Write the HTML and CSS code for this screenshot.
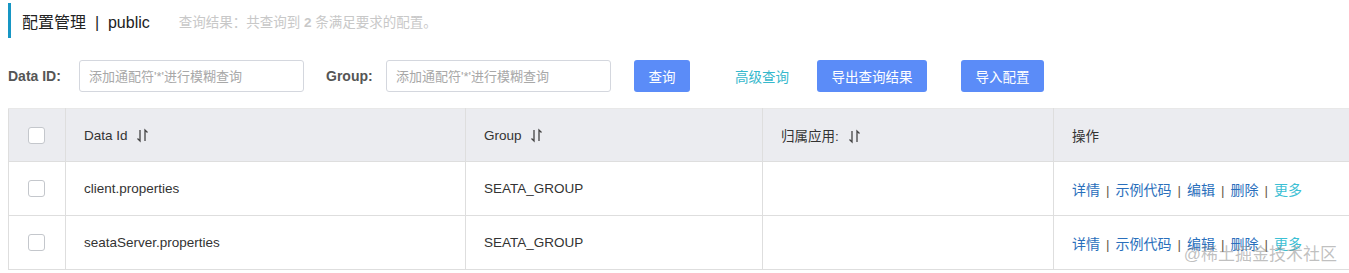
FILE: index.html
```html
<!DOCTYPE html>
<html lang="zh-CN">
<head>
    <meta charset="UTF-8">
    <meta name="viewport" content="width=device-width, initial-scale=1.0">
    <title>配置管理 - public</title>
    <link rel="stylesheet" href="styles.css">
</head>
<body>
    <div class="page">
        <div class="title-bar">
            <span class="title">配置管理 &nbsp;|&nbsp; public</span>
            <span class="result">查询结果：共查询到 <b>2</b> 条满足要求的配置。</span>
        </div>

        <div class="search-row">
            <label class="label label-id">Data ID:</label>
            <input class="input" type="text" placeholder="添加通配符'*'进行模糊查询">
            <label class="label label-group">Group:</label>
            <input class="input" type="text" placeholder="添加通配符'*'进行模糊查询">
            <button class="btn btn-search">查询</button>
            <a class="advanced" href="#">高级查询</a>
            <button class="btn btn-export">导出查询结果</button>
            <button class="btn btn-import">导入配置</button>
        </div>

        <table class="config-table">
            <colgroup>
                <col class="col-check">
                <col class="col-id">
                <col class="col-group">
                <col class="col-app">
                <col class="col-ops">
            </colgroup>
            <thead>
                <tr>
                    <th><span class="checkbox"></span></th>
                    <th>Data Id <svg class="sort" width="13" height="15" viewBox="0 0 13 15"><path d="M4 2V13L1.5 10.5M9 13V2L11.5 4.5" fill="none" stroke="#444" stroke-width="1.3"/></svg></th>
                    <th>Group <svg class="sort" width="13" height="15" viewBox="0 0 13 15"><path d="M4 2V13L1.5 10.5M9 13V2L11.5 4.5" fill="none" stroke="#444" stroke-width="1.3"/></svg></th>
                    <th>归属应用: <svg class="sort" width="13" height="15" viewBox="0 0 13 15"><path d="M4 2V13L1.5 10.5M9 13V2L11.5 4.5" fill="none" stroke="#444" stroke-width="1.3"/></svg></th>
                    <th>操作</th>
                </tr>
            </thead>
            <tbody>
                <tr>
                    <td><span class="checkbox"></span></td>
                    <td>client.properties</td>
                    <td>SEATA_GROUP</td>
                    <td></td>
                    <td class="ops">
                        <a href="#">详情</a><span class="sep">|</span><a href="#">示例代码</a><span class="sep">|</span><a href="#">编辑</a><span class="sep">|</span><a href="#">删除</a><span class="sep">|</span><a class="more" href="#">更多</a>
                    </td>
                </tr>
                <tr>
                    <td><span class="checkbox"></span></td>
                    <td>seataServer.properties</td>
                    <td>SEATA_GROUP</td>
                    <td></td>
                    <td class="ops">
                        <a href="#">详情</a><span class="sep">|</span><a href="#">示例代码</a><span class="sep">|</span><a href="#">编辑</a><span class="sep">|</span><a href="#">删除</a><span class="sep">|</span><a class="more" href="#">更多</a>
                    </td>
                </tr>
            </tbody>
        </table>

        <div class="watermark">@稀土掘金技术社区</div>
    </div>
</body>
</html>
```

FILE: styles.css
```css
html, body {
    margin: 0;
    padding: 0;
    overflow: hidden;
}

body {
    font-family: "Liberation Sans", "Noto Sans CJK SC", sans-serif;
    color: #333;
    background: #fff;
}

.page {
    position: relative;
    padding: 3px 0 0 8px;
    height: 270px;
}

.title-bar {
    display: flex;
    align-items: center;
    height: 35px;
    border-left: 3px solid #1796c4;
    padding-left: 11px;
}

.title {
    font-size: 16px;
    color: #222;
}

.result {
    margin-left: 29px;
    font-size: 13.5px;
    color: #c8c8c8;
}

.result b {
    font-weight: bold;
}

.search-row {
    display: flex;
    align-items: center;
    margin-top: 22px;
    height: 32px;
}

.label {
    font-size: 14px;
    font-weight: bold;
    color: #555;
}

.label-id {
    width: 71px;
}

.label-group {
    width: 60px;
    margin-left: 22px;
}

.input {
    box-sizing: border-box;
    width: 225px;
    height: 32px;
    padding: 0 9px;
    border: 1px solid #d4d7de;
    border-radius: 3px;
    font-family: inherit;
    font-size: 13px;
    color: #333;
}

.input::placeholder {
    color: #a8a8a8;
}

.btn {
    height: 32px;
    border: none;
    border-radius: 3px;
    background-color: #5b8cf8;
    color: #fff;
    font-family: inherit;
    font-size: 13.5px;
    padding: 0;
    cursor: pointer;
}

.btn-search {
    width: 56px;
    margin-left: 23px;
}

.advanced {
    display: inline-block;
    width: 55px;
    margin-left: 45px;
    font-size: 13.5px;
    color: #35b8cc;
    text-decoration: none;
    white-space: nowrap;
}

.btn-export {
    width: 110px;
    margin-left: 27px;
}

.btn-import {
    width: 83px;
    margin-left: 34px;
}

.config-table {
    margin-top: 16px;
    width: 1341px;
    border-collapse: collapse;
    table-layout: fixed;
    font-size: 13.5px;
}

.col-check { width: 57px; }
.col-id { width: 400px; }
.col-group { width: 297px; }
.col-app { width: 291px; }
.col-ops { width: 296px; }

.config-table th,
.config-table td {
    text-align: left;
    padding: 0 0 0 18px;
    border: 1px solid #dedede;
    white-space: nowrap;
}

.config-table th:first-child,
.config-table td:first-child {
    padding-left: 19px;
}

.config-table th:last-child,
.config-table td:last-child {
    border-right: none;
}

.config-table thead tr {
    height: 53px;
    background-color: #ebecf0;
}

.config-table th {
    font-weight: normal;
    color: #333;
    border-top-color: #e8e8e8;
}

.config-table tbody tr {
    height: 54px;
}

.sort {
    vertical-align: -3px;
    margin-left: 5px;
}

.checkbox {
    display: inline-block;
    box-sizing: border-box;
    width: 17px;
    height: 17px;
    border: 1px solid #c4c7cc;
    border-radius: 3px;
    background: #fff;
    vertical-align: middle;
}

.ops a {
    color: #2a6fbc;
    text-decoration: none;
    font-size: 14px;
}

.ops a.more {
    color: #3cc0d4;
}

.sep {
    margin: 0 6px;
    color: #6b5a4a;
}

.watermark {
    position: absolute;
    right: 12px;
    top: 240px;
    font-size: 17px;
    color: rgba(130, 130, 130, 0.5);
    pointer-events: none;
}
```
